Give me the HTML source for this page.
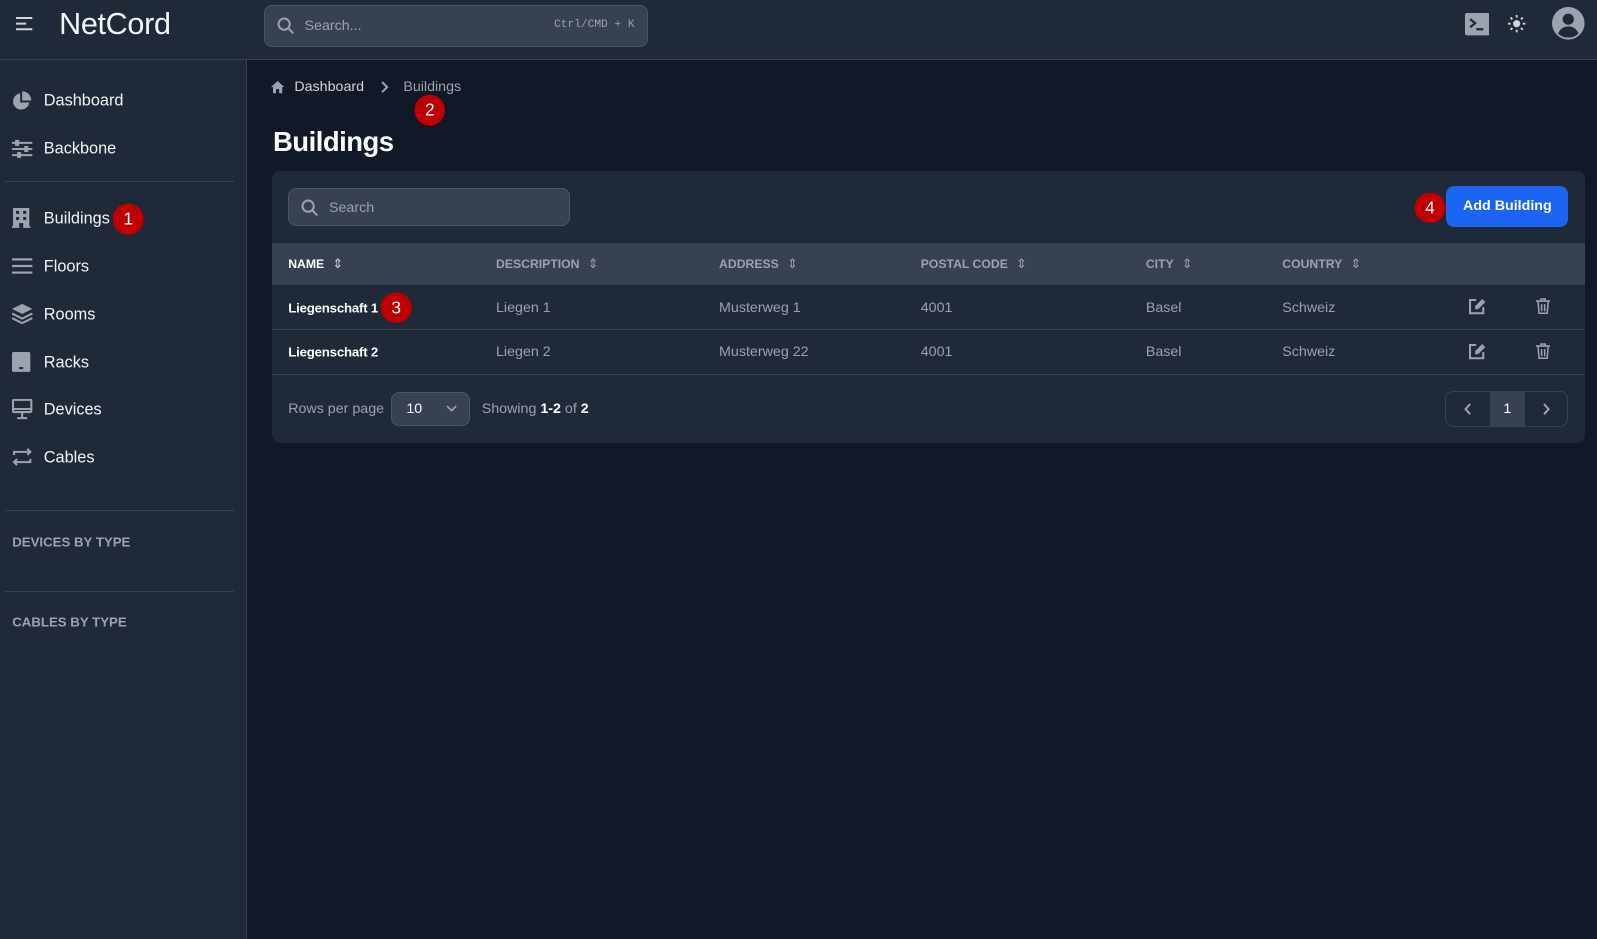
<!DOCTYPE html>
<html><head><meta charset="utf-8"><style>
*{box-sizing:border-box;margin:0;padding:0}
html,body{width:1597px;height:939px;overflow:hidden;background:#111827}
body{font-family:"Liberation Sans",sans-serif;color:#fff}
#root{zoom:1.0185;width:1568px;height:922px;position:relative;background:#111827}
.abs{position:absolute}
.top{left:0;top:0;width:1568px;height:59px;background:#1f2937;border-bottom:1px solid #374151}
.side{left:0;top:59px;width:243px;height:863px;background:#1f2937;border-right:1px solid #374151}
.nav{position:absolute;left:43px;font-size:16px;color:#f3f4f6;transform:translateY(-50%)}
.ic{position:absolute;left:12px;transform:translateY(-50%)}
.hr{position:absolute;left:5px;width:225px;height:1px;background:#374151}
.sec{position:absolute;left:12px;font-size:13px;font-weight:bold;color:#9ca3af;transform:translateY(-50%)}
.badge{position:absolute;width:30px;height:30px;border-radius:50%;background:#c00000;color:#fff;font-size:17px;text-align:center;line-height:30px;transform:translate(-50%,-50%)}
.th{position:absolute;top:259px;transform:translateY(-50%);font-size:12px;font-weight:bold;color:#9ca3af;display:flex;align-items:center;gap:8px}
.th span{font-size:13px;font-weight:normal}
.td{position:absolute;transform:translateY(-50%);font-size:14px;color:#9ca3af}
</style></head><body><div id="root">
<div class="abs top"></div>
<svg class="abs" style="left:15px;top:16px" width="18" height="15" viewBox="0 0 18 15"><path d="M1 2h16M1 7.5h10M1 13h16" stroke="#d1d5db" stroke-width="2"/></svg>
<div class="abs" style="left:58px;top:7px;font-size:30px;color:#f3f4f6;letter-spacing:-0.3px">NetCord</div>
<div class="abs" style="left:259px;top:5px;width:377px;height:41px;background:#374151;border:1px solid #4b5563;border-radius:8px"></div>
<svg class="abs" style="left:272px;top:17px" width="17" height="17" viewBox="0 0 17 17"><circle cx="7" cy="7" r="5.5" stroke="#9ca3af" stroke-width="2" fill="none"/><path d="M11 11l5 5" stroke="#9ca3af" stroke-width="2"/></svg>
<div class="abs" style="left:299px;top:18px;font-size:14px;color:#9ca3af">Search...</div>
<div class="abs" style="left:544px;top:19px;font-size:11px;color:#9ca3af;font-family:'Liberation Mono',monospace">Ctrl/CMD + K</div>
<svg class="abs" style="left:1438px;top:13px" width="24" height="22" viewBox="0 0 24 22"><rect width="24" height="22" rx="2" fill="#9ca3af"/><path d="M5 6l5 4-5 4M11 16h7" stroke="#1f2937" stroke-width="2.2" fill="none"/></svg>
<svg class="abs" style="left:1480px;top:14px" width="19" height="19" viewBox="0 0 19 19" fill="#d1d5db"><circle cx="9.5" cy="9.5" r="3.5"/><g stroke="#d1d5db" stroke-width="1.8"><path d="M9.5 1v2.5M9.5 15.5V18M1 9.5h2.5M15.5 9.5H18M3.5 3.5l1.8 1.8M13.7 13.7l1.8 1.8M3.5 15.5l1.8-1.8M13.7 5.3l1.8-1.8"/></g></svg>
<svg class="abs" style="left:1524px;top:7px" width="32" height="32" viewBox="0 0 32 32"><circle cx="16" cy="16" r="16" fill="#9ca3af"/><circle cx="16" cy="12" r="5.5" fill="#1f2937"/><path d="M6 26c2-5 6-7 10-7s8 2 10 7c-3 3-6 4-10 4s-7-1-10-4z" fill="#1f2937"/></svg>

<div class="abs side"></div>
<svg class="ic" style="top:99px" width="19" height="19" viewBox="0 0 19 19"><path d="M8 2a8 8 0 1 0 9 9H8z" fill="#9ca3af"/><path d="M10 0v9h9a9 9 0 0 0-9-9z" fill="#9ca3af"/></svg>
<div class="nav" style="top:99px">Dashboard</div>
<svg class="ic" style="top:146px" width="20" height="18" viewBox="0 0 20 18"><g stroke="#9ca3af" stroke-width="2"><path d="M0 3h20M0 9h20M0 15h20"/></g><g fill="#9ca3af"><rect x="3" y="0" width="4" height="6"/><rect x="12" y="6" width="4" height="6"/><rect x="5" y="12" width="4" height="6"/></g></svg>
<div class="nav" style="top:146px">Backbone</div>
<div class="hr" style="top:178px"></div>
<svg class="ic" style="top:214px" width="18" height="20" viewBox="0 0 18 20"><path d="M1 0h16v18h1v2H0v-2h1z" fill="#9ca3af"/><g fill="#1f2937"><rect x="4" y="3" width="3" height="3"/><rect x="11" y="3" width="3" height="3"/><rect x="4" y="9" width="3" height="3"/><rect x="11" y="9" width="3" height="3"/><rect x="7" y="15" width="4" height="5"/></g></svg>
<div class="nav" style="top:215px">Buildings</div>
<svg class="ic" style="top:261px" width="20" height="16" viewBox="0 0 20 16"><path d="M0 1.5h20M0 8h20M0 14.5h20" stroke="#9ca3af" stroke-width="2.2"/></svg>
<div class="nav" style="top:262px">Floors</div>
<svg class="ic" style="top:308px" width="20" height="20" viewBox="0 0 20 20"><path d="M10 0l10 5-10 5L0 5z" fill="#9ca3af"/><path d="M0 9.5l10 5 10-5M0 14l10 5 10-5" stroke="#9ca3af" stroke-width="2" fill="none"/></svg>
<div class="nav" style="top:309px">Rooms</div>
<svg class="ic" style="top:355px" width="18" height="20" viewBox="0 0 18 20"><rect width="18" height="20" rx="2" fill="#9ca3af"/><rect x="7" y="15" width="4" height="2" fill="#1f2937"/></svg>
<div class="nav" style="top:356px">Racks</div>
<svg class="ic" style="top:402px" width="20" height="20" viewBox="0 0 20 20"><rect x="1" y="1" width="18" height="12" rx="1" stroke="#9ca3af" stroke-width="2" fill="none"/><path d="M1 10h18M10 13v5M5 19h10" stroke="#9ca3af" stroke-width="2"/></svg>
<div class="nav" style="top:403px">Devices</div>
<svg class="ic" style="top:449px" width="20" height="18" viewBox="0 0 20 18"><path d="M2 7V4h16M15 1l3 3-3 3M18 11v3H2M5 11l-3 3 3 3" stroke="#9ca3af" stroke-width="2" fill="none"/></svg>
<div class="nav" style="top:450px">Cables</div>
<div class="hr" style="top:501px"></div>
<div class="sec" style="top:532px">DEVICES BY TYPE</div>
<div class="hr" style="top:580px"></div>
<div class="sec" style="top:611px">CABLES BY TYPE</div>

<svg class="abs" style="left:266px;top:80px" width="13" height="12" viewBox="0 0 13 12"><path d="M6.5 0L13 6h-2v6H8V8H5v4H2V6H0z" fill="#9ca3af"/></svg>
<div class="abs" style="left:289px;top:78px;font-size:14px;color:#d1d5db">Dashboard</div>
<svg class="abs" style="left:373px;top:80px" width="9" height="12" viewBox="0 0 9 12"><path d="M2 1l5 5-5 5" stroke="#9ca3af" stroke-width="2" fill="none"/></svg>
<div class="abs" style="left:396px;top:78px;font-size:14px;color:#9ca3af">Buildings</div>
<div class="abs" style="left:268px;top:124px;font-size:27px;font-weight:bold;letter-spacing:-0.5px">Buildings</div>

<div class="abs" style="left:267px;top:168px;width:1289px;height:267px;background:#1f2937;border-radius:8px;overflow:hidden">
<div class="abs" style="left:16px;top:17px;width:277px;height:37px;background:#374151;border:1px solid #4b5563;border-radius:8px"></div>
<svg class="abs" style="left:29px;top:27px" width="17" height="17" viewBox="0 0 17 17"><circle cx="7" cy="7" r="5.5" stroke="#9ca3af" stroke-width="2" fill="none"/><path d="M11 11l5 5" stroke="#9ca3af" stroke-width="2"/></svg>
<div class="abs" style="left:56px;top:28px;font-size:14px;color:#9ca3af">Search</div>
<div class="abs" style="left:1153px;top:15px;width:120px;height:40px;background:#1c64f2;border-radius:8px;font-size:14px;font-weight:bold;text-align:center;line-height:40px">Add Building</div>
<div class="abs" style="left:0;top:71px;width:1289px;height:41px;background:#374151"></div>
<div class="abs" style="left:0;top:155px;width:1289px;height:1px;background:#374151"></div>
<div class="abs" style="left:0;top:199px;width:1289px;height:1px;background:#374151"></div>
<div class="abs" style="left:1152px;top:216px;width:121px;height:35px;border:1px solid #374151;border-radius:8px;overflow:hidden"><div class="abs" style="left:43px;top:0;width:34px;height:35px;background:#374151;color:#fff;font-size:14px;text-align:center;line-height:34px">1</div></div>
<svg class="abs" style="left:1170px;top:228px" width="8" height="12" viewBox="0 0 8 12"><path d="M6 1L1.5 6 6 11" stroke="#9ca3af" stroke-width="2" fill="none"/></svg>
<svg class="abs" style="left:1247px;top:228px" width="8" height="12" viewBox="0 0 8 12"><path d="M2 1l4.5 5L2 11" stroke="#9ca3af" stroke-width="2" fill="none"/></svg>
<div class="abs" style="left:16px;top:226px;font-size:14px;color:#9ca3af">Rows per page</div>
<div class="abs" style="left:117px;top:217px;width:77px;height:33px;background:#374151;border:1px solid #4b5563;border-radius:8px"></div>
<div class="abs" style="left:132px;top:226px;font-size:14px;color:#fff">10</div>
<svg class="abs" style="left:171px;top:230px" width="11" height="7" viewBox="0 0 11 7"><path d="M1 1l4.5 4.5L10 1" stroke="#9ca3af" stroke-width="1.6" fill="none"/></svg>
<div class="abs" style="left:206px;top:226px;font-size:14px;color:#9ca3af">Showing <b style="color:#fff">1-2</b> of <b style="color:#fff">2</b></div>
</div>

<div class="th" style="left:283px;color:#fff">NAME <span style="color:#d1d5db">⇕</span></div>
<div class="th" style="left:487px">DESCRIPTION <span>⇕</span></div>
<div class="th" style="left:706px">ADDRESS <span>⇕</span></div>
<div class="th" style="left:904px">POSTAL CODE <span>⇕</span></div>
<div class="th" style="left:1125px">CITY <span>⇕</span></div>
<div class="th" style="left:1259px">COUNTRY <span>⇕</span></div>

<div class="td" style="left:283px;top:302px;color:#fff;font-weight:bold;font-size:13px;letter-spacing:-0.2px">Liegenschaft 1</div>
<div class="td" style="left:487px;top:302px">Liegen 1</div>
<div class="td" style="left:706px;top:302px">Musterweg 1</div>
<div class="td" style="left:904px;top:302px">4001</div>
<div class="td" style="left:1125px;top:302px">Basel</div>
<div class="td" style="left:1259px;top:302px">Schweiz</div>
<div class="td" style="left:283px;top:346px;color:#fff;font-weight:bold;font-size:13px;letter-spacing:-0.2px">Liegenschaft 2</div>
<div class="td" style="left:487px;top:346px">Liegen 2</div>
<div class="td" style="left:706px;top:346px">Musterweg 22</div>
<div class="td" style="left:904px;top:346px">4001</div>
<div class="td" style="left:1125px;top:346px">Basel</div>
<div class="td" style="left:1259px;top:346px">Schweiz</div>

<svg class="abs" style="left:1442px;top:293px" width="17" height="16" viewBox="0 0 17 16"><path d="M7 2H1v13h13V9" stroke="#9ca3af" stroke-width="2" fill="none"/><path d="M13 1l3 3-7 7H6V8z" fill="#9ca3af"/></svg>
<svg class="abs" style="left:1442px;top:337px" width="17" height="16" viewBox="0 0 17 16"><path d="M7 2H1v13h13V9" stroke="#9ca3af" stroke-width="2" fill="none"/><path d="M13 1l3 3-7 7H6V8z" fill="#9ca3af"/></svg>
<svg class="abs" style="left:1508px;top:293px" width="14" height="16" viewBox="0 0 14 16"><path d="M0 3h14M5 3V1h4v2M2 3l1 12h8l1-12M5.5 6v7M8.5 6v7" stroke="#9ca3af" stroke-width="1.5" fill="none"/></svg>
<svg class="abs" style="left:1508px;top:337px" width="14" height="16" viewBox="0 0 14 16"><path d="M0 3h14M5 3V1h4v2M2 3l1 12h8l1-12M5.5 6v7M8.5 6v7" stroke="#9ca3af" stroke-width="1.5" fill="none"/></svg>

<div class="badge" style="left:126px;top:215px">1</div>
<div class="badge" style="left:422px;top:108px">2</div>
<div class="badge" style="left:389px;top:302px">3</div>
<div class="badge" style="left:1404px;top:204px">4</div>
</div></body></html>
